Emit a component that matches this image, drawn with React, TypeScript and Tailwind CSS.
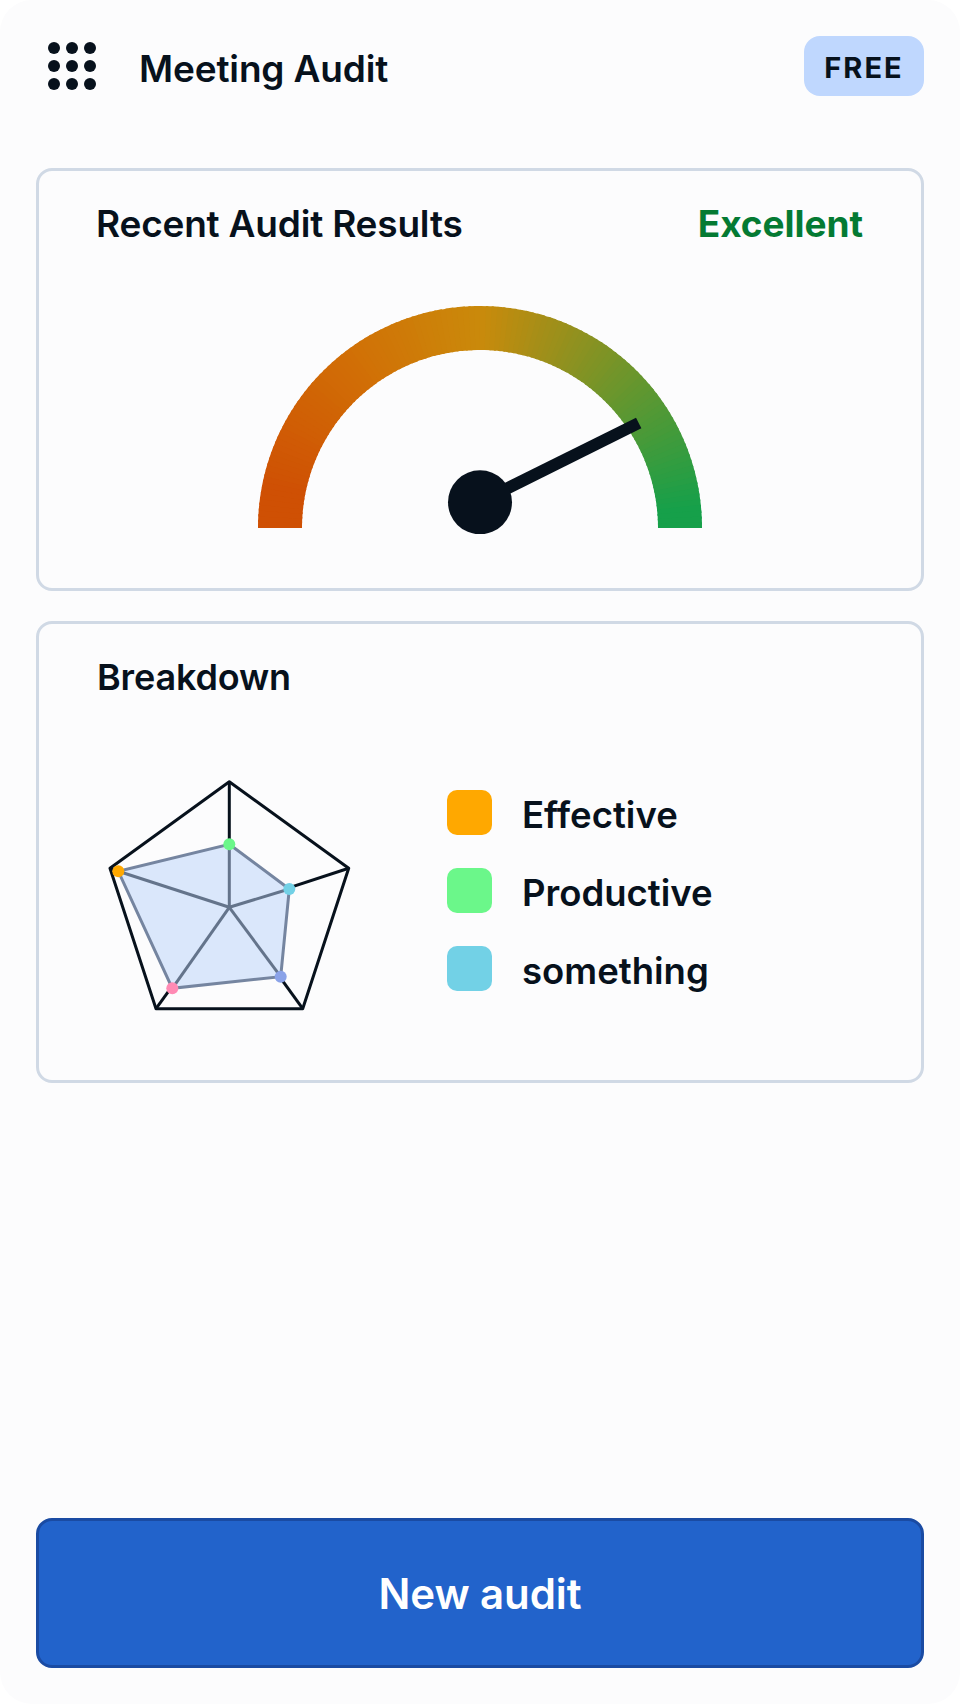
import React from 'react';

const font = { fontFamily: 'Inter, "Noto Sans", sans-serif' };

// gauge sweep: left end -> top -> right end, split in small arcs to get an angular gradient
const stops = [
    { at: 0, c: [207, 80, 4] },
    { at: 0.06, c: [207, 80, 4] },
    { at: 0.3, c: [209, 112, 6] },
    { at: 0.5, c: [202, 138, 11] },
    { at: 0.97, c: [22, 160, 74] },
    { at: 1, c: [22, 160, 74] },
];

const colorAt = (t: number) => {
    for (let i = 0; i < stops.length - 1; i++) {
        const a = stops[i];
        const b = stops[i + 1];
        if (t <= b.at) {
            const k = (t - a.at) / (b.at - a.at);
            const mix = a.c.map((v, j) => Math.round(v + (b.c[j] - v) * k));
            return `rgb(${mix[0]},${mix[1]},${mix[2]})`;
        }
    }
    return 'rgb(22,160,74)';
};

const Gauge = () => {
    const n = 120;
    const cx = 222;
    const cy = 222;
    const r = 200;
    const segments = Array.from({ length: n }, (_, i) => {
        const a0 = Math.PI - (Math.PI * i) / n;
        const a1 = Math.PI - (Math.PI * (i + 1.4)) / n;
        const end = i === n - 1 ? 0 : a1;
        return {
            d: `M${cx + r * Math.cos(a0)} ${cy - r * Math.sin(a0)}A${r} ${r} 0 0 1 ${cx + r * Math.cos(end)} ${cy - r * Math.sin(end)}`,
            color: colorAt((i + 0.5) / n),
        };
    });
    return (
        <svg width="444" height="228" viewBox="0 0 444 228" className="block">
            {segments.map((s, i) => (
                <path key={i} d={s.d} fill="none" stroke={s.color} strokeWidth="44" />
            ))}
            <line x1="222" y1="196" x2="380.7" y2="117" stroke="#07111c" strokeWidth="12" />
            <circle cx="222" cy="196.3" r="32" fill="#07111c" />
        </svg>
    );
};

const Radar = () => {
    // outer pentagon and data polygon, same origin as the svg box
    const outer = [[119.3, 1.7], [238.7, 88.3], [192.7, 228.7], [46, 228.7], [0, 88.3]];
    const data = [[119.3, 64.3], [179.3, 109], [170.7, 196.7], [62.3, 208.3], [8.3, 91.3]];
    const dots = ['#6bf78a', '#72d1e6', '#8aa2e8', '#ff8ab4', '#ffa800'];
    const c = [119.3, 127.3];
    const pts = (p: number[][]) => p.map((v) => v.join(',')).join(' ');
    return (
        <svg width="244" height="234" viewBox="-2 0 244 234" className="block shrink-0">
            {outer.map((p, i) => (
                <line key={i} x1={c[0]} y1={c[1]} x2={p[0]} y2={p[1]} stroke="#07111c" strokeWidth="3" />
            ))}
            <polygon points={pts(outer)} fill="none" stroke="#07111c" strokeWidth="3" strokeLinejoin="round" />
            <polygon points={pts(data)} fill="#dae7fb" stroke="#7585a0" strokeWidth="3" />
            {data.map((p, i) => (
                <line key={i} x1={c[0]} y1={c[1]} x2={p[0]} y2={p[1]} stroke="#64748b" strokeWidth="3" />
            ))}
            {data.map((p, i) => (
                <circle key={i} cx={p[0]} cy={p[1]} r="6" fill={dots[i]} />
            ))}
        </svg>
    );
};

const DotsIcon = () => (
    <svg width="48" height="48" viewBox="0 0 48 48" className="block shrink-0">
        {[6, 24, 42].map((y) =>
            [6, 24, 42].map((x) => <circle key={`${x}-${y}`} cx={x} cy={y} r="6" fill="#07111c" />),
        )}
    </svg>
);

const legend = [
    { label: 'Effective', swatch: 'bg-[#ffa800]' },
    { label: 'Productive', swatch: 'bg-[#6bf78a]' },
    { label: 'something', swatch: 'bg-[#72d1e6]' },
];

export default function App() {
    return (
        <div className="w-[960px] h-[1704px] bg-white" style={font}>
            <div className="h-full rounded-[32px] bg-[#fcfcfd] px-[36px] flex flex-col">
                <header className="h-[168px] flex items-start justify-between">
                    <div className="flex items-start mt-[42px] pl-[12px]">
                        <DotsIcon />
                        <h1 className="ml-[43px] mt-[3px] text-[37px] leading-[48px] font-semibold tracking-[-0.15px] text-[#07111c]">Meeting Audit</h1>
                    </div>
                    <div className="mt-[36px] w-[120px] h-[60px] rounded-[16px] bg-[#bfd7fe] flex items-center justify-center pt-[3px] text-[29px] font-bold tracking-[2px] text-[#07111c]">
                        FREE
                    </div>
                </header>

                <section className="h-[423px] rounded-[16px] border-[3px] border-[#d0d9e5] pt-[29px] flex flex-col">
                    <div className="flex items-center justify-between pl-[57px] pr-[58px] h-[48px]">
                        <h2 className="text-[37px] font-semibold tracking-[-0.2px] text-[#07111c]">Recent Audit Results</h2>
                        <span className="text-[37px] font-bold tracking-[-0.05px] text-[#047a33]">Excellent</span>
                    </div>
                    <div className="flex justify-center mt-[58px]">
                        <Gauge />
                    </div>
                </section>

                <section className="mt-[30px] h-[462px] rounded-[16px] border-[3px] border-[#d0d9e5] pt-[29px]">
                    <h2 className="pl-[58px] text-[36px] leading-[48px] font-semibold tracking-[-0.15px] text-[#07111c]">Breakdown</h2>
                    <div className="flex items-start pl-[69px] mt-[79px]">
                        <Radar />
                        <ul className="ml-[95px] mt-[10px] flex flex-col gap-[33px]">
                            {legend.map((item) => (
                                <li key={item.label} className="flex items-center h-[45px]">
                                    <span className={`w-[45px] h-[45px] rounded-[10px] ${item.swatch}`} />
                                    <span className="ml-[30px] mt-[6px] text-[36.5px] font-semibold text-[#07111c]">{item.label}</span>
                                </li>
                            ))}
                        </ul>
                    </div>
                </section>

                <button className="mt-auto mb-[36px] h-[150px] rounded-[16px] border-[3px] border-[#1a4ba3] bg-[#2263cb] text-[42px] font-semibold tracking-[-0.1px] text-white">
                    New audit
                </button>
            </div>
        </div>
    );
}
